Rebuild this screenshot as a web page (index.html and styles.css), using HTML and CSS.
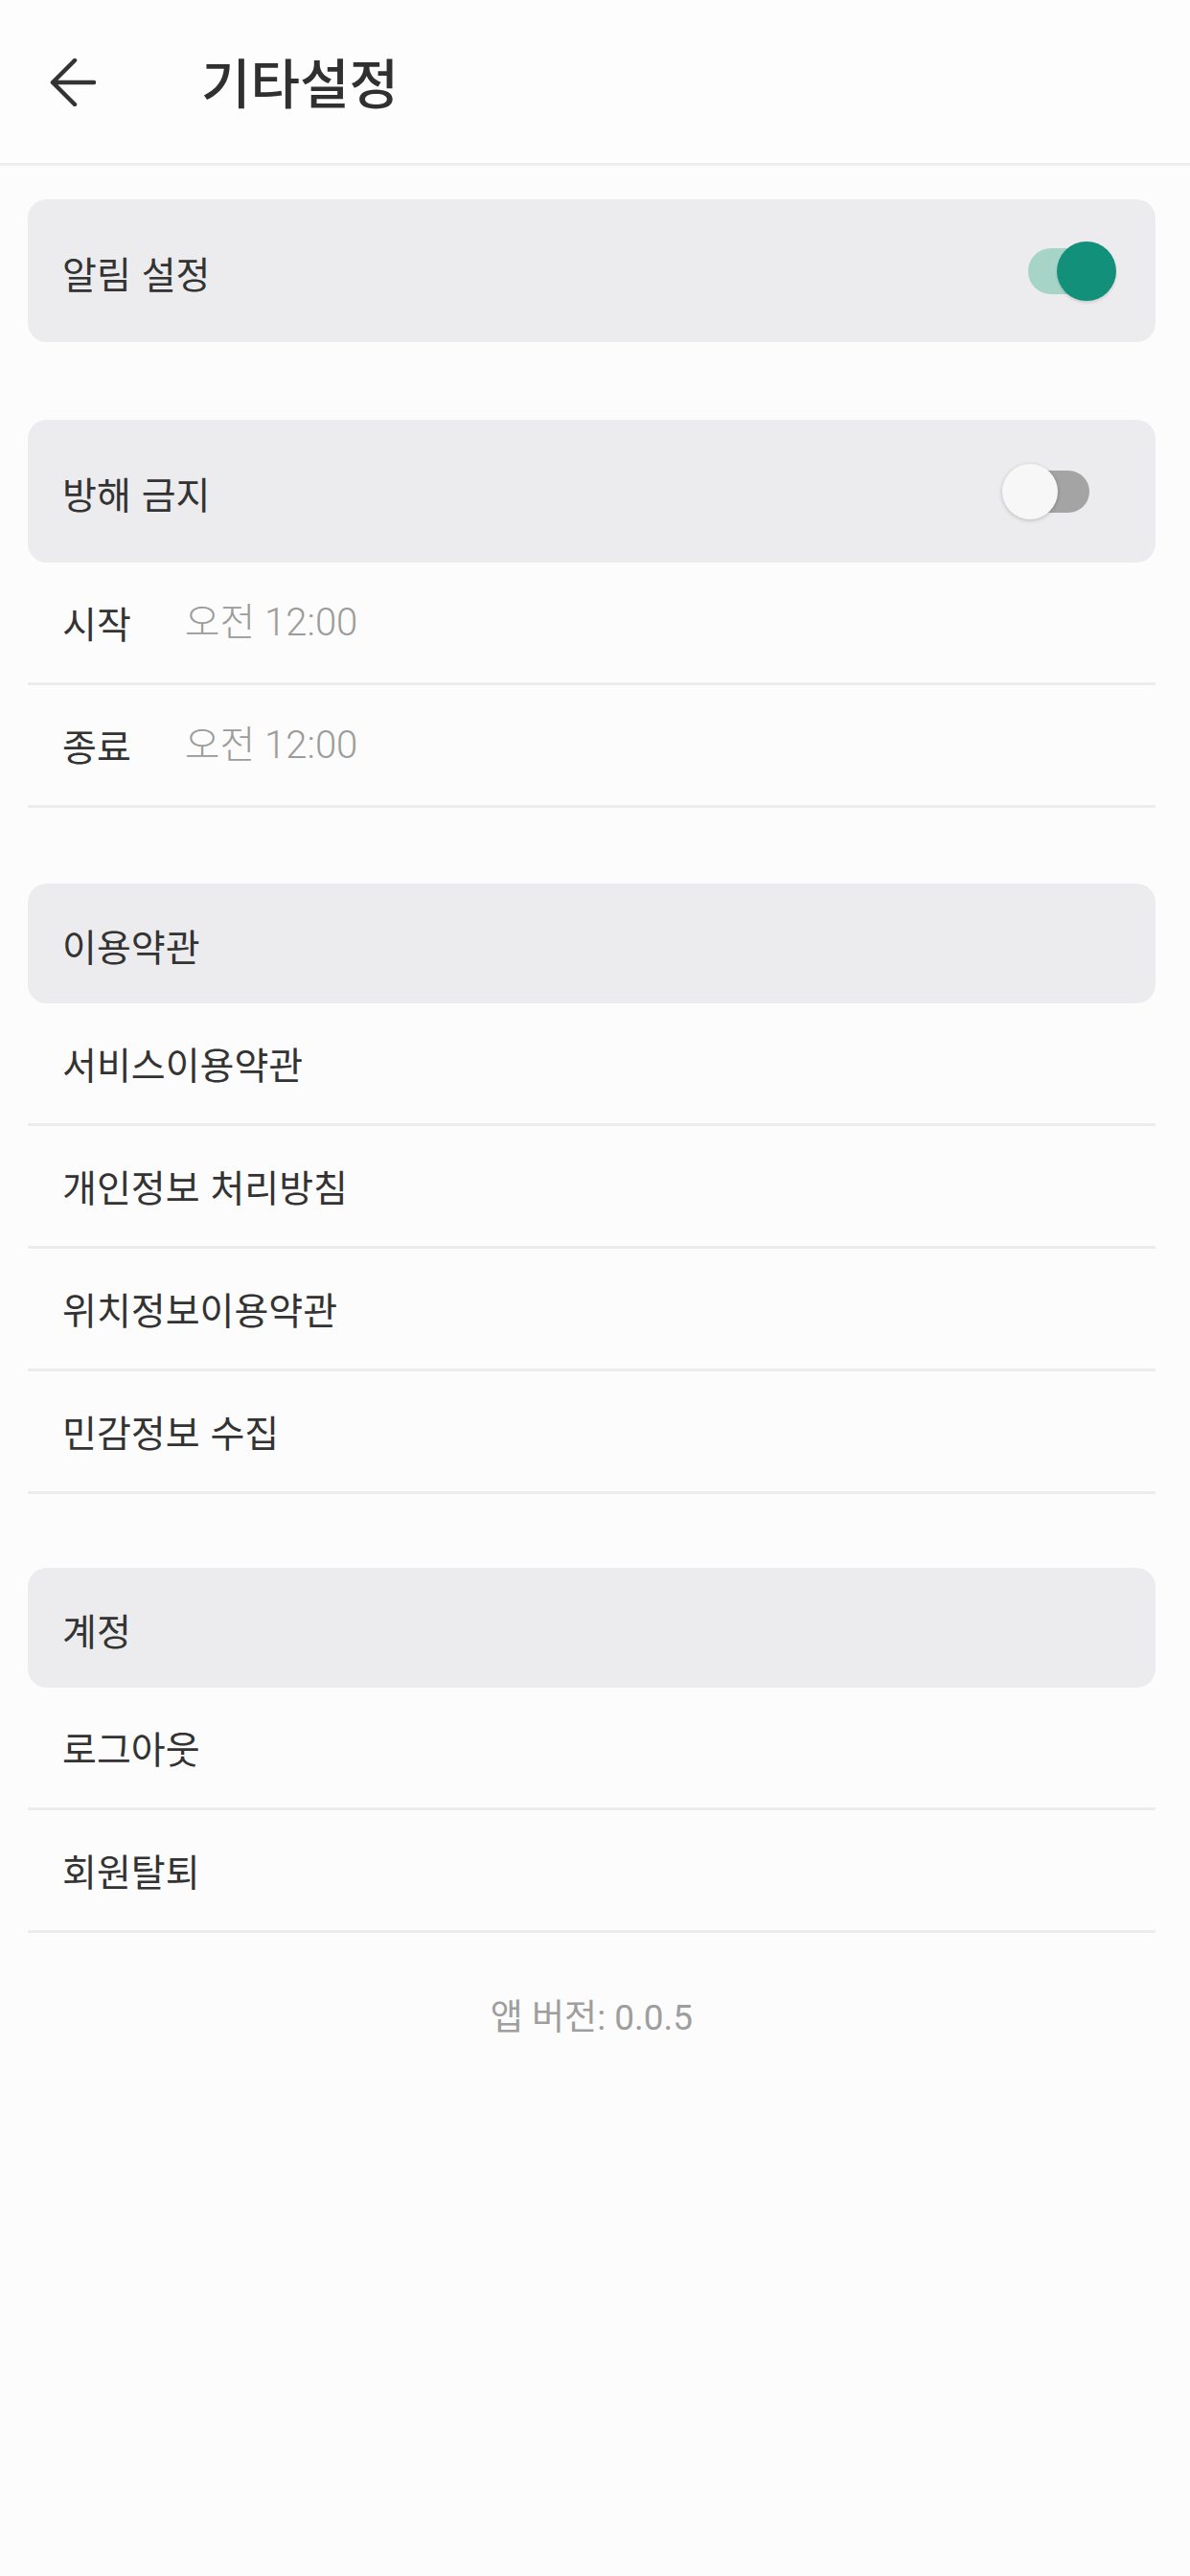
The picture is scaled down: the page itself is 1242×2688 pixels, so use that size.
FILE: index.html
```html
<!DOCTYPE html>
<html lang="ko">
<head>
<meta charset="utf-8">
<title>기타설정</title>
<link rel="stylesheet" href="styles.css">
</head>
<body>
<header class="appbar">
  <svg class="back" viewBox="0 0 48 50" width="48" height="50" aria-hidden="true">
    <path d="M46 25 H3 M26 2 L3 25 L26 48" fill="none" stroke="#333" stroke-width="4.5" stroke-linecap="round" stroke-linejoin="round"/>
  </svg>
  <h1 class="title">기타설정</h1>
</header>
<main class="content">
  <section class="section">
    <div class="card card-tall">
      <span class="label">알림 설정</span>
      <div class="toggle toggle-on"><span class="track"></span><span class="thumb"></span></div>
    </div>
  </section>
  <section class="section section-dnd">
    <div class="card card-tall">
      <span class="label">방해 금지</span>
      <div class="toggle toggle-off"><span class="track"></span><span class="thumb"></span></div>
    </div>
    <div class="row"><span class="label">시작</span><span class="value">오전 12:00</span></div>
    <div class="row"><span class="label">종료</span><span class="value">오전 12:00</span></div>
  </section>
  <section class="section section-terms">
    <div class="card"><span class="label">이용약관</span></div>
    <div class="row"><span class="label">서비스이용약관</span></div>
    <div class="row"><span class="label">개인정보 처리방침</span></div>
    <div class="row"><span class="label">위치정보이용약관</span></div>
    <div class="row"><span class="label">민감정보 수집</span></div>
  </section>
  <section class="section section-account">
    <div class="card"><span class="label">계정</span></div>
    <div class="row"><span class="label">로그아웃</span></div>
    <div class="row"><span class="label">회원탈퇴</span></div>
  </section>
  <p class="version">앱 버전: 0.0.5</p>
</main>
</body>
</html>
```
FILE: styles.css
```css
* { box-sizing: border-box; }
html, body {
  margin: 0;
  padding: 0;
  background: #fcfcfc;
  font-family: Roboto, "Noto Sans CJK KR", "Noto Sans", sans-serif;
  color: #333;
}
body { min-height: 2688px; }

.appbar {
  height: 173px;
  display: flex;
  align-items: center;
  padding-left: 52px;
  background: #fdfdfd;
  border-bottom: 3px solid #eeeeee;
}
.back { display: block; margin-top: 2px; }
.title {
  margin: 0 0 2px 110px;
  font-family: "Noto Sans CJK KR", sans-serif;
  font-size: 56px;
  font-weight: 500;
  color: #303030;
  line-height: 1.2;
}

.content {
  padding: 35px 36px 0 29px;
  display: flex;
  flex-direction: column;
}
.section { display: flex; flex-direction: column; }
.section-dnd { margin-top: 81px; }
.section-terms { margin-top: 79px; }
.section-account { margin-top: 77px; }

.card {
  height: 125px;
  border-radius: 20px;
  background: #ececee;
  display: flex;
  align-items: center;
  justify-content: space-between;
  padding-left: 36px;
}
.card-tall { height: 149px; }

.label {
  font-family: "Noto Sans CJK KR", sans-serif;
  font-size: 39px;
  font-weight: 400;
  color: #333;
  line-height: 1.2;
}
.card .label { margin-top: 4px; }

.row {
  height: 128px;
  display: flex;
  align-items: center;
  padding-left: 36px;
  border-bottom: 3px solid #ececec;
}
.value {
  margin-left: 56px;
  font-family: Roboto, "Noto Sans CJK KR", sans-serif;
  font-size: 40px;
  font-weight: 300;
  color: #9b9b9b;
  line-height: 1.2;
}

.toggle {
  position: relative;
  width: 92px;
  height: 64px;
  flex: none;
}
.toggle .track {
  position: absolute;
  display: block;
}
.toggle .thumb {
  position: absolute;
  display: block;
  border-radius: 50%;
}
.toggle-on { margin-right: 41px; }
.toggle-on .track {
  left: 0;
  top: 8px;
  width: 78px;
  height: 48px;
  border-radius: 24px;
  background: #a6d5c8;
}
.toggle-on .thumb {
  left: 30px;
  top: 1px;
  width: 62px;
  height: 62px;
  background: #13907a;
  box-shadow: 0 2px 3px rgba(0, 0, 0, 0.12);
}
.toggle-off { margin-right: 69px; }
.toggle-off .track {
  left: 10px;
  top: 10px;
  width: 82px;
  height: 44px;
  border-radius: 22px;
  background: #a4a4a4;
}
.toggle-off .thumb {
  left: 1px;
  top: 3px;
  width: 58px;
  height: 58px;
  background: #f7f7f7;
  box-shadow: 0 1px 4px rgba(0, 0, 0, 0.22);
}

.version {
  margin: 64px 0 0;
  text-align: center;
  font-family: Roboto, "Noto Sans CJK KR", sans-serif;
  font-size: 37px;
  font-weight: 400;
  color: #9e9e9e;
  line-height: 50px;
}
```
